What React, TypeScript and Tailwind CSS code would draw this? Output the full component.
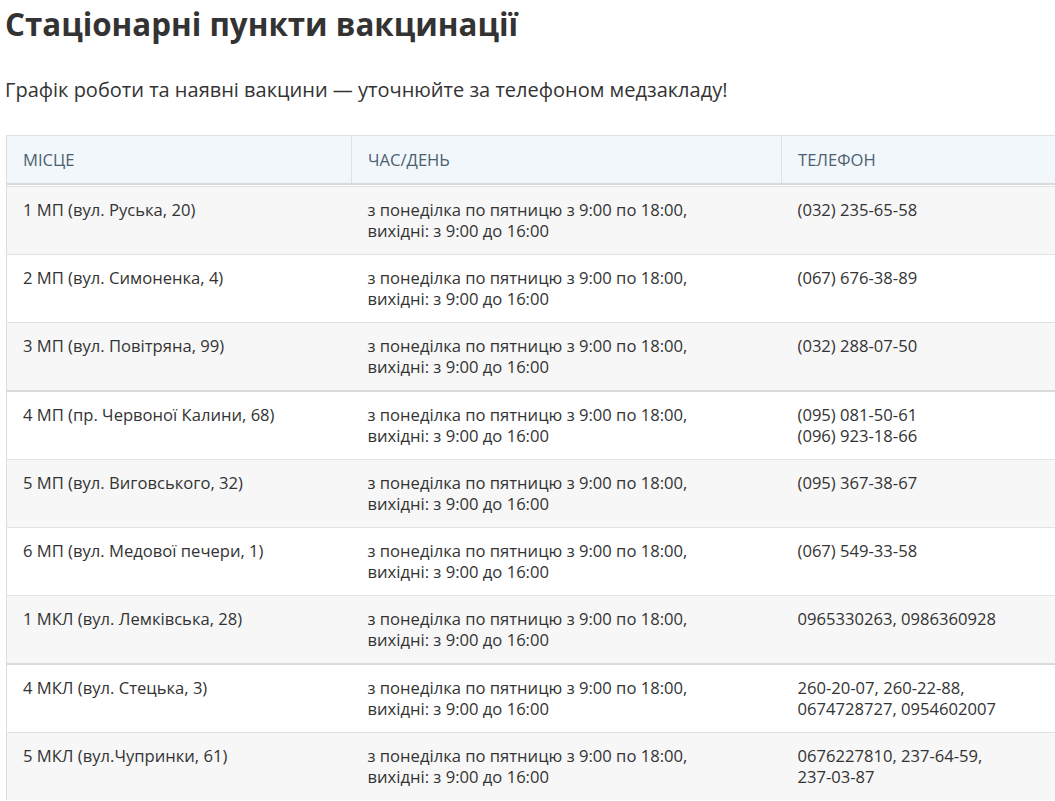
const rows = [
  { group: 0, place: "1 МП (вул. Руська, 20)", phone: [["(032) 235-65-58"]] },
  { group: 0, place: "2 МП (вул. Симоненка, 4)", phone: [["(067) 676-38-89"]] },
  { group: 0, place: "3 МП (вул. Повітряна, 99)", phone: [["(032) 288-07-50"]] },
  { group: 1, place: "4 МП (пр. Червоної Калини, 68)", phone: [["(095) 081-50-61"], ["(096) 923-18-66"]] },
  { group: 1, place: "5 МП (вул. Виговського, 32)", phone: [["(095) 367-38-67"]] },
  { group: 1, place: "6 МП (вул. Медової печери, 1)", phone: [["(067) 549-33-58"]] },
  { group: 1, place: "1 МКЛ (вул. Лемківська, 28)", phone: [["0965330263", "0986360928"]] },
  { group: 2, place: "4 МКЛ (вул. Стецька, 3)", phone: [["260-20-07", "260-22-88", "0674728727", "0954602007"]] },
  { group: 2, place: "5 МКЛ (вул.Чупринки, 61)", phone: [["0676227810", "237-64-59", "237-03-87"]] },
];

type RowData = (typeof rows)[number];

function RowCells({ row, index }: { row: RowData; index: number }) {
  const bg = index % 2 === 0 ? "bg-[#f7f7f7]" : "bg-white";
  const pad =
    index === 0
      ? "shadow-[inset_0_1px_0_#ffffff,inset_0_2px_0_#e3e3e3] pt-[14px] pb-[13px]"
      : "pt-[12px] pb-[13px]";
  const cell = `${bg} ${pad} align-top px-4`;
  return (
    <>
      <td className={cell}>{row.place}</td>
      <td className={cell}>
        з понеділка по пятницю з 9:00 по 18:00,
        <br />
        вихідні: з 9:00 до 16:00
      </td>
      <td className={cell}>
        {row.phone.map((line, i) => (
          <div key={i}>
            {line.map((p, j) => (
              <span key={j}>
                <span className="whitespace-nowrap">
                  {p}
                  {j < line.length - 1 ? "," : ""}
                </span>
                {j < line.length - 1 ? " " : ""}
              </span>
            ))}
          </div>
        ))}
      </td>
    </>
  );
}

export default function App() {
  const groups = [0, 1, 2].map((g) =>
    rows.map((r, i) => ({ r, i })).filter((x) => x.r.group === g)
  );

  return (
    <div className="min-h-screen bg-white text-[#333] font-['Open_Sans','Liberation_Sans',sans-serif] overflow-hidden">
      <div className="pl-[5px]">
        <h1 className="pt-[3px] text-[31.3px] leading-[42px] font-bold text-[#333]">
          Стаціонарні пункти вакцинації
        </h1>
        <p className="mt-[31px] text-[20px] leading-[28px] text-[#333]">
          Графік роботи та наявні вакцини — уточнюйте за телефоном медзакладу!
        </p>
      </div>

      <table className="mt-[31px] ml-[6px] w-[1049px] table-fixed border-collapse text-[16.6px] leading-[21px] border-l border-[#dddddd]">
        <colgroup>
          <col className="w-[345px]" />
          <col className="w-[430px]" />
          <col className="w-[274px]" />
        </colgroup>
        <thead>
          <tr className="bg-[#f2f7fb] text-[#4b6170] text-left">
            <th className="h-[48px] font-normal px-4 border-t border-b-2 border-r border-[#dde2e6] border-b-[#d9d9d9]">МІСЦЕ</th>
            <th className="h-[48px] font-normal px-4 border-t border-b-2 border-r border-[#dde2e6] border-b-[#d9d9d9]">ЧАС/ДЕНЬ</th>
            <th className="h-[48px] font-normal px-4 border-t border-b-2 border-[#dde2e6] border-b-[#d9d9d9]">ТЕЛЕФОН</th>
          </tr>
        </thead>
        {groups.map((g, gi) => (
          <tbody key={gi} className={gi === 0 ? "" : "border-t-2 border-[#dadada]"}>
            {g.map(({ r, i }, k) => (
              <tr key={i} className={k > 0 ? "border-t border-[#e2e2e2]" : ""}>
                <RowCells row={r} index={i} />
              </tr>
            ))}
          </tbody>
        ))}
      </table>
    </div>
  );
}
